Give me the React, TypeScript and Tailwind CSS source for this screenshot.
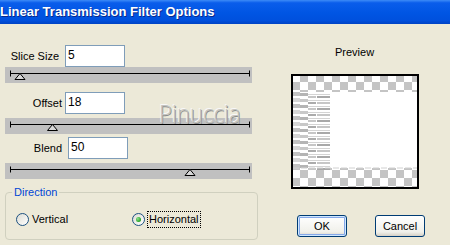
import React from "react";

// Linear Transmission Filter Options - XP style dialog
const font = "font-['Liberation_Sans',Arial,sans-serif]";

function Slider({ pos }: { pos: number }) {
  return (
    <div className="h-[16px] w-[247px] bg-[#C0C0C0]">
      <svg width="247" height="16" viewBox="0 0 247 16" aria-hidden>
        <path d="M5 6.5H244.5" stroke="#000" strokeWidth={1} />
        <path d="M5.5 3.5V9.5M244.5 3.5V9.5" stroke="#000" strokeWidth={1} />
        <path
          d={`M${pos} 6.5 L${pos + 5} 12.5 L${pos - 5} 12.5 Z`}
          fill="#D8D8D8"
          stroke="#000"
          strokeWidth={1}
          strokeLinejoin="miter"
        />
      </svg>
    </div>
  );
}

function Field({ value }: { value: string }) {
  return (
    <div className="h-[22px] w-[60px] border border-[#7F9DB9] bg-white pl-[2px] pt-[2px] text-[12px] leading-[15px] text-black">
      {value}
    </div>
  );
}

function Radio({ on }: { on?: boolean }) {
  return (
    <span className="flex h-[13px] w-[13px] items-center justify-center rounded-full border border-[#1C5180] bg-[linear-gradient(135deg,#DCDCD3,#FFFFFF)]">
      {on && (
        <span className="h-[5px] w-[5px] rounded-full bg-[radial-gradient(circle_at_35%_35%,#8FE38F,#21A121_70%)]" />
      )}
    </span>
  );
}

function Preview() {
  const rows = Array.from({ length: 13 }, (_, i) => 18 + i * 6);
  return (
    <svg width="124" height="111" viewBox="0 0 124 111" aria-hidden>
      <defs>
        <pattern id="chk" x="-1" y="-2" width="16" height="16" patternUnits="userSpaceOnUse">
          <rect width="16" height="16" fill="#fff" />
          <rect x="8" y="0" width="8" height="8" fill="#C4C4C4" />
          <rect x="0" y="8" width="8" height="8" fill="#C4C4C4" />
        </pattern>
      </defs>
      <rect width="124" height="111" fill="url(#chk)" />
      <rect x="0" y="16" width="124" height="76" fill="#fff" />
      {/* striped left side */}
      {rows.map((y, i) => (
        <g key={y}>
          <rect x="0" y={y - 2} width="7" height="4" fill={i % 2 ? "#D6D6D6" : "#C2C2C2"} />
          <rect x="7" y={y - 1} width="8" height="3" fill={i % 2 ? "#C8C8C8" : "#B4B4B4"} />
          <rect x="15" y={y} width="22" height="1" fill="#D4D4D4" />
          <rect x="15" y={y + 2} width="8" height="2" fill={i % 2 ? "#ABABAB" : "#C6C6C6"} />
          <rect x="24" y={y + 2} width="13" height="2" fill={i % 2 ? "#C6C6C6" : "#A8A8A8"} />
        </g>
      ))}
      <path d="M0 92H124" stroke="#D0D0D0" strokeWidth={1} strokeDasharray="6 2" />
    </svg>
  );
}

export default function App() {
  return (
    <div className={`relative flex h-[245px] w-[450px] flex-col overflow-hidden bg-[#ECE9D8] ${font} text-[11px] text-black`}>
      {/* Title bar */}
      <div className="flex h-[24px] shrink-0 items-center bg-[linear-gradient(180deg,#3D8BF7_0%,#0A5DEB_12%,#0055E3_55%,#0050DD_85%,#0043C4_100%)]">
        <span className="pb-[1px] text-[13px] font-bold leading-none text-white [text-shadow:1px_1px_0_#0A2A8C]">
          Linear Transmission Filter Options
        </span>
      </div>

      <div className="flex">
        {/* Left column */}
        <div className="flex w-[258px] flex-col pl-[5px]">
          <div className="mt-[21px] flex h-[22px] items-center">
            <span className="w-[60px] pr-[6px] text-right">Slice Size</span>
            <Field value="5" />
          </div>
          <Slider pos={15} />

          <div className="mt-[9px] flex h-[22px] items-center">
            <span className="w-[60px] pr-[3px] text-right">Offset</span>
            <Field value="18" />
          </div>
          <div className="mt-[4px]">
            <Slider pos={47.5} />
          </div>

          <div className="mt-[3px] flex h-[22px] items-center">
            <span className="w-[63px] pr-[6px] text-right">Blend</span>
            <Field value="50" />
          </div>
          <div className="mt-[4px]">
            <Slider pos={185} />
          </div>

          <fieldset className="mt-[6px] h-[55px] w-[253px] rounded-[4px] border border-[#D0D0BF] px-[6px]">
            <legend className="px-[2px] text-[11px] leading-[14px] text-[#0046D5]">Direction</legend>
            <div className="mt-[11px] flex h-[18px] items-center">
              <div className="flex w-[120px] items-center gap-[3px] pl-[4px]">
                <Radio />
                <span>Vertical</span>
              </div>
              <div className="flex items-center gap-[2px]">
                <Radio on />
                <span className="border border-dotted border-black px-[1px] leading-[15px]">Horizontal</span>
              </div>
            </div>
          </fieldset>
        </div>

        {/* Right column */}
        <div className="flex flex-1 flex-col">
          <div className="mt-[21px] w-[192px] pl-[77px] leading-[14px]">Preview</div>
          <div className="ml-[33px] mt-[15px] h-[115px] w-[128px] border-2 border-black">
            <Preview />
          </div>
          <div className="ml-[39px] mt-[26px] flex gap-[28px]">
            <button className="flex h-[22px] w-[50px] items-center justify-center rounded-[3px] border border-[#003C74] bg-[linear-gradient(180deg,#FFFFFF,#F0F0EA_80%,#D6D0C5)] shadow-[inset_0_0_0_1px_#CEE7FF,inset_0_0_0_2px_#86A8E8]">
              OK
            </button>
            <button className="flex h-[22px] w-[50px] items-center justify-center rounded-[3px] border border-[#003C74] bg-[linear-gradient(180deg,#FFFFFF,#F0F0EA_80%,#D6D0C5)]">
              Cancel
            </button>
          </div>
        </div>
      </div>

      {/* Watermark */}
      <span className="absolute left-[159px] top-[100px] origin-left scale-x-[0.85] font-['Open_Sans',sans-serif] text-[26px] font-light leading-none text-[#C4C4C0] [text-shadow:1px_1px_0_#8C8C8C,-1px_-1px_0_#F8F8F8]">
        Pinuccia
      </span>
    </div>
  );
}
